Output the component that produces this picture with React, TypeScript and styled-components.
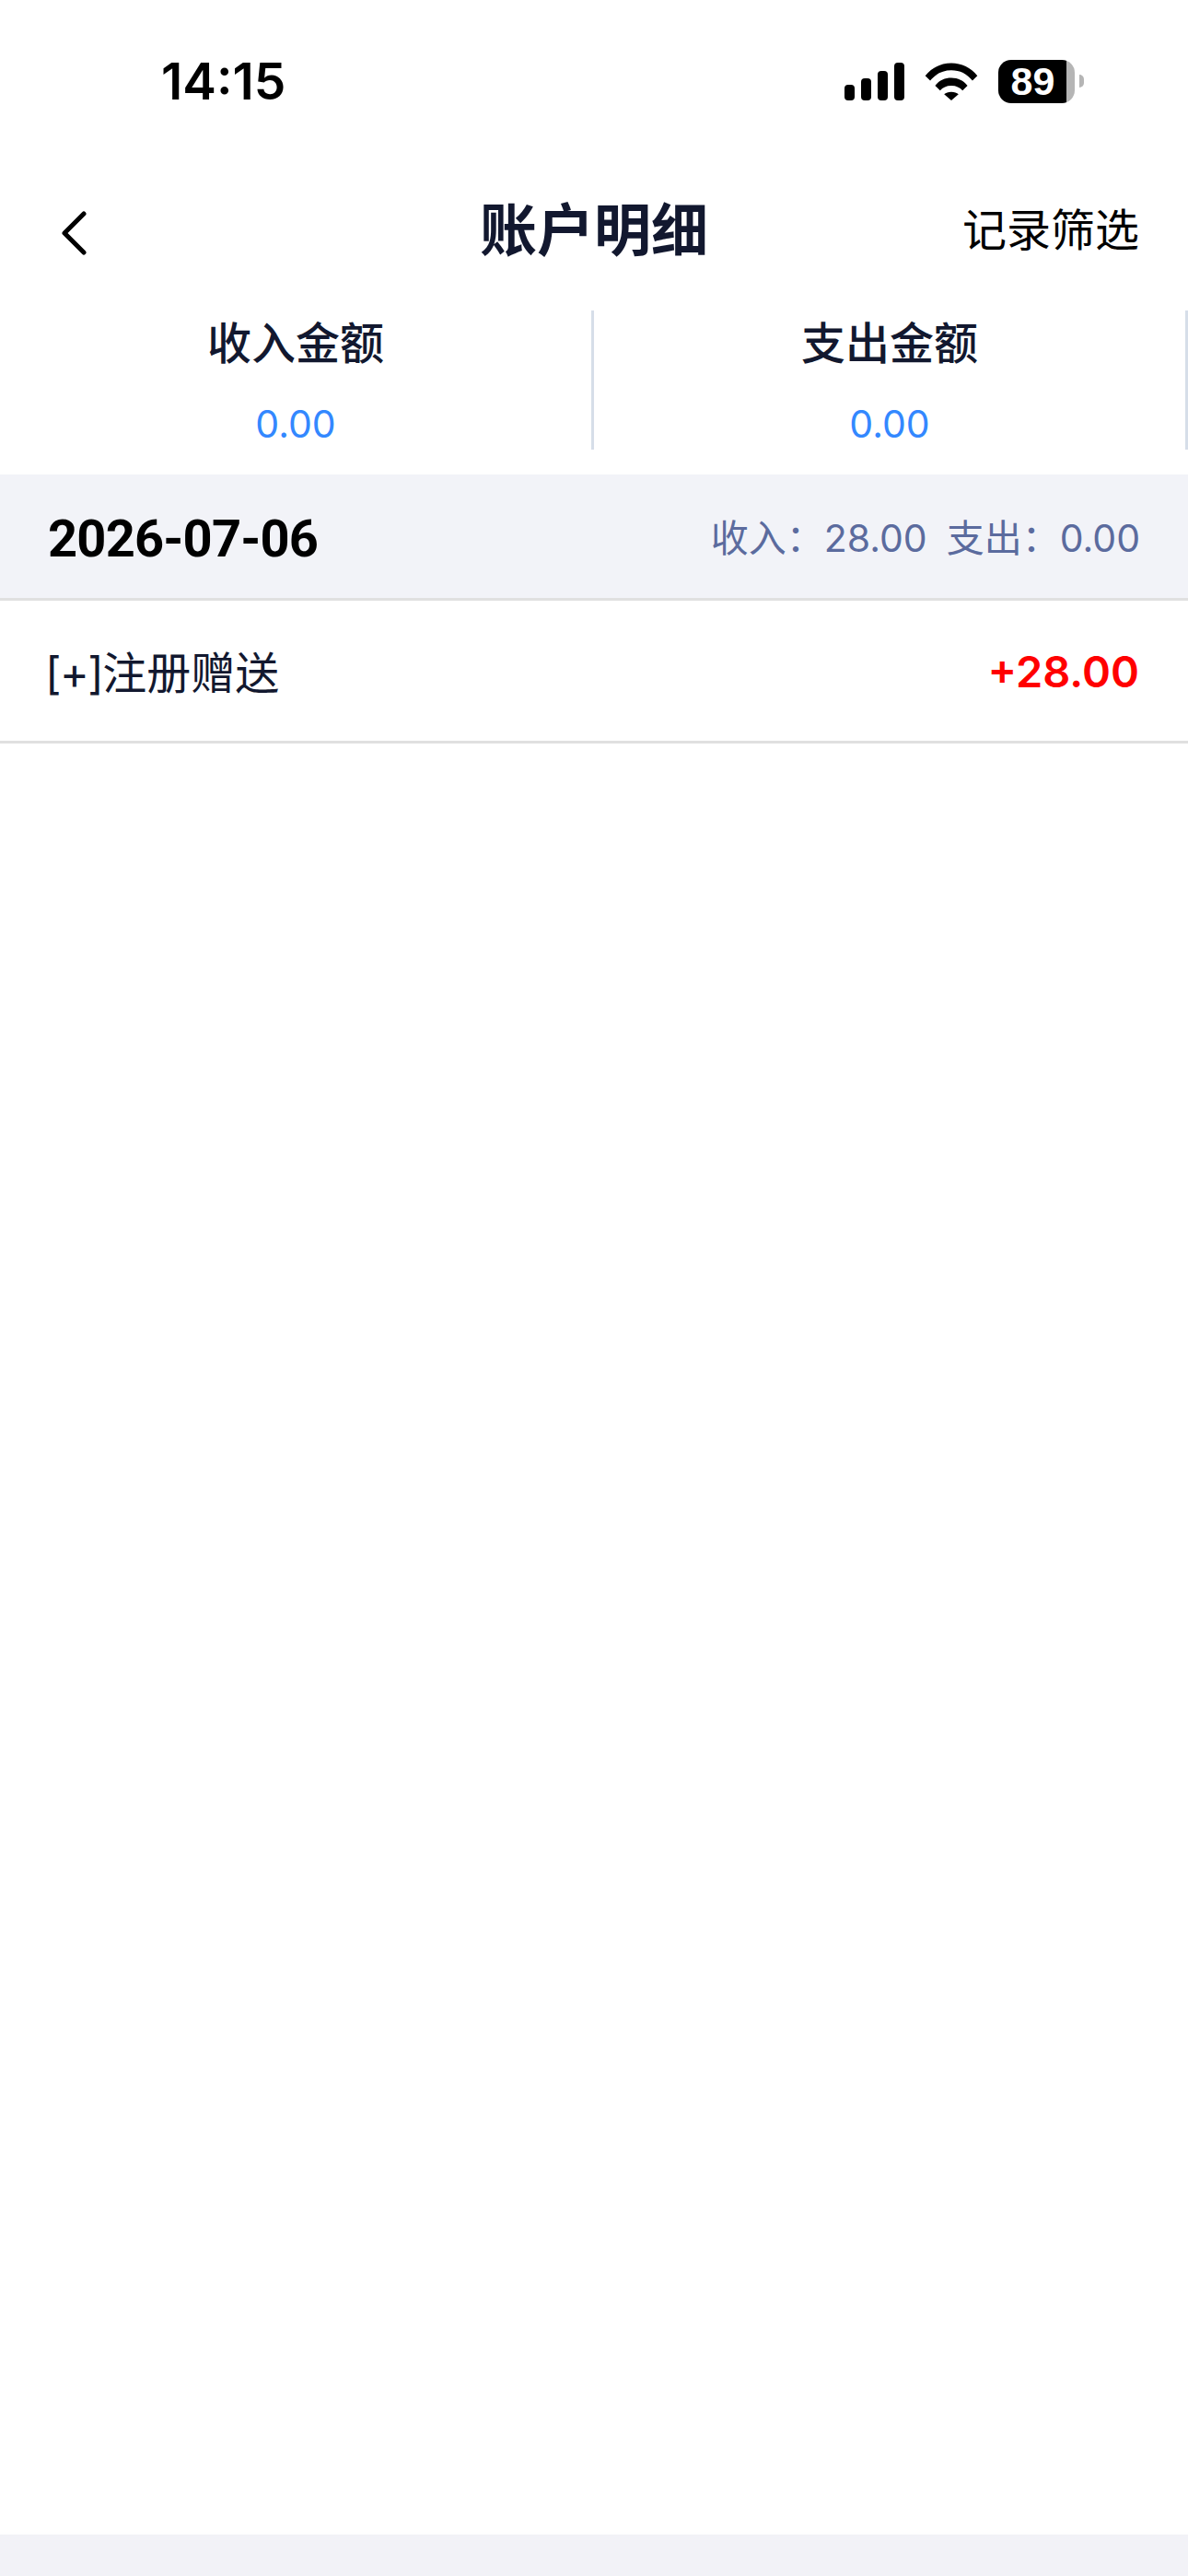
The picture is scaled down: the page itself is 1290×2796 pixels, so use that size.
import React from 'react';
import styled, { createGlobalStyle } from 'styled-components';

const GlobalStyle = createGlobalStyle`
  html, body {
    margin: 0;
    padding: 0;
    background: #fff;
    font-family: "Liberation Sans", "Noto Sans CJK SC", sans-serif;
  }
`;

const Page = styled.div`
  width: 1290px;
  height: 2796px;
  display: flex;
  flex-direction: column;
  background: #fff;
  overflow: hidden;
`;

const StatusBar = styled.div`
  height: 176px;
  flex: none;
  display: flex;
  justify-content: space-between;
  align-items: center;
  padding: 0 123px 0 175px;
  box-sizing: border-box;
`;

const Clock = styled.span`
  font-family: Inter, sans-serif;
  font-size: 55px;
  font-weight: 600;
  color: #000;
`;

const StatusIcons = styled.div`
  display: flex;
  align-items: center;
  gap: 22px;
`;

const Battery = styled.div`
  position: relative;
  width: 83px;
  height: 47px;
  display: flex;
  align-items: center;
  justify-content: center;
  padding-right: 8px;
  box-sizing: border-box;
  border-radius: 14px;
  background: linear-gradient(90deg, #000 0 89%, #b5b5b5 89% 100%);
  color: #fff;
  font-size: 43px;
  font-weight: 700;
  &::after {
    content: '';
    position: absolute;
    right: -10px;
    top: 16px;
    width: 5px;
    height: 14px;
    border-radius: 0 6px 6px 0;
    background: #b5b5b5;
  }
`;

const NavBar = styled.div`
  height: 150px;
  flex: none;
  display: grid;
  grid-template-columns: 1fr auto 1fr;
  align-items: center;
  padding: 0 53px 0 66px;
  margin-bottom: 11px;
`;

const BackButton = styled.div`
  display: flex;
  padding-top: 4px;
`;

const Title = styled.h1`
  margin: 0 0 0 -13px;
  padding-bottom: 10px;
  font-size: 62px;
  font-weight: 700;
  color: #12182f;
`;

const FilterLink = styled.span`
  justify-self: end;
  padding-bottom: 10px;
  font-size: 48px;
  color: #000;
`;

const Summary = styled.div`
  display: grid;
  grid-template-columns: 645px 645px;
  height: 151px;
  flex: none;
`;

const SummaryCell = styled.div`
  display: flex;
  flex-direction: column;
  align-items: center;
  justify-content: space-between;
  border-right: 3px solid #d6dee9;
  box-sizing: border-box;
  padding: 7px 0 3px;
`;

const SummaryLabel = styled.span`
  font-size: 48px;
  font-weight: 500;
  line-height: 60px;
  color: #12182f;
`;

const SummaryValue = styled.span`
  font-family: Inter, sans-serif;
  font-size: 41px;
  line-height: 50px;
  color: #3388ff;
`;

const DayHeader = styled.div`
  margin-top: 27px;
  height: 137px;
  flex: none;
  display: flex;
  justify-content: space-between;
  align-items: center;
  padding: 0 52px 0 52px;
  box-sizing: border-box;
  background: #f2f3f8;
  border-bottom: 3px solid #e0e0e0;
`;

const DayDate = styled.span`
  font-family: Roboto, sans-serif;
  font-size: 56px;
  font-weight: 700;
  letter-spacing: -0.8px;
  padding-top: 5px;
  color: #000;
`;

const DayTotals = styled.div`
  display: flex;
  gap: 21px;
  padding-bottom: 3px;
  font-family: Inter, "Noto Sans CJK SC", sans-serif;
  font-size: 41px;
  color: #5b6b9e;
`;

const Record = styled.div`
  height: 155px;
  flex: none;
  display: flex;
  justify-content: space-between;
  align-items: center;
  padding: 0 53px 0 49px;
  box-sizing: border-box;
  border-bottom: 3px solid #e0e0e0;
`;

const RecordName = styled.span`
  padding-bottom: 2px;
  font-family: Inter, "Noto Sans CJK SC", sans-serif;
  font-size: 48px;
  color: #12182f;
`;

const RecordTag = styled.span`
  letter-spacing: -1.5px;
`;

const RecordAmount = styled.span<{ $tone: string }>`
  font-family: Inter, sans-serif;
  font-size: 47px;
  font-weight: 600;
  color: ${p => p.$tone};
`;

const Spacer = styled.div`
  flex: 1;
`;

const BottomBand = styled.div`
  height: 45px;
  flex: none;
  background: #f2f2f7;
`;

const SignalIcon = () => (
  <svg width="65" height="41" viewBox="0 0 65 41" fill="#000">
    <rect x="0" y="24" width="11" height="17" rx="4" />
    <rect x="18" y="17" width="11" height="24" rx="4" />
    <rect x="36" y="9" width="11" height="32" rx="4" />
    <rect x="54" y="0" width="11" height="41" rx="4" />
  </svg>
);

const WifiIcon = () => (
  <svg width="58" height="41" viewBox="0 0 58 42" fill="#000">
    <path d="M0 14.5C7.5 5.5 17.5 0.5 29 0.5s21.500 5 29 14L52.500 20C46.500 12.500 38.500 8.500 29 8.500S11.500 12.500 5.500 20z" />
    <path d="M11 25.500C15.500 20 21.500 17 29 17s13.500 3 18 8.500L41.500 31C38.500 27.500 34.500 25.500 29 25.500S19.500 27.500 16.500 31z" />
    <path d="M21 35C23 33.500 25.500 32.500 29 32.500S35 33.500 37 35L29 42z" />
  </svg>
);

const BackIcon = () => (
  <svg width="30" height="50" viewBox="0 0 30 50" fill="none" stroke="#000" strokeWidth="5" strokeLinecap="round" strokeLinejoin="round">
    <path d="M25 4L4 25l21 21" />
  </svg>
);

export default function App() {
  return (
    <Page>
      <GlobalStyle />
      <StatusBar>
        <Clock>14:15</Clock>
        <StatusIcons>
          <SignalIcon />
          <WifiIcon />
          <Battery>89</Battery>
        </StatusIcons>
      </StatusBar>
      <NavBar>
        <BackButton><BackIcon /></BackButton>
        <Title>账户明细</Title>
        <FilterLink>记录筛选</FilterLink>
      </NavBar>
      <Summary>
        <SummaryCell>
          <SummaryLabel>收入金额</SummaryLabel>
          <SummaryValue>0.00</SummaryValue>
        </SummaryCell>
        <SummaryCell>
          <SummaryLabel>支出金额</SummaryLabel>
          <SummaryValue>0.00</SummaryValue>
        </SummaryCell>
      </Summary>
      <DayHeader>
        <DayDate>2026-07-06</DayDate>
        <DayTotals>
          <span>收入：28.00</span>
          <span>支出：0.00</span>
        </DayTotals>
      </DayHeader>
      <Record>
        <RecordName><RecordTag>[+]</RecordTag>注册赠送</RecordName>
        <RecordAmount $tone="#ff0000">+28.00</RecordAmount>
      </Record>
      <Spacer />
      <BottomBand />
    </Page>
  );
}
